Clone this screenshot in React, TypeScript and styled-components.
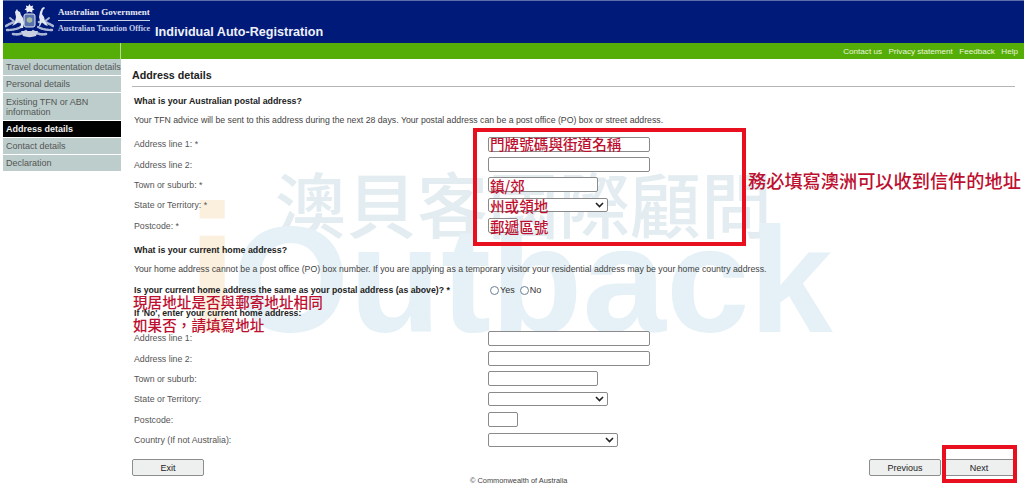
import { FC } from "react";
import styled, { createGlobalStyle } from "styled-components";

const GlobalStyle = createGlobalStyle`
  html, body {
    margin: 0;
    padding: 0;
    background: #fff;
  }
  * {
    box-sizing: border-box;
  }
`;

const navItems = [
  { label: "Travel documentation details" },
  { label: "Personal details" },
  { label: "Existing TFN or ABN information", tall: true },
  { label: "Address details", active: true },
  { label: "Contact details" },
  { label: "Declaration" },
];

const Emblem: FC = () => (
  <svg width="49" height="36" viewBox="0 0 49 36">
    {/* wattle sprays */}
    <g fill="none" stroke="#aab6d4" strokeLinecap="round">
      <path d="M1 23c5-3 9-5 14-4" strokeWidth="2.6" strokeDasharray="2 1.4" />
      <path d="M48 23c-5-3-9-5-14-4" strokeWidth="2.6" strokeDasharray="2 1.4" />
      <path d="M2 27c6 0 10-1 14-3" strokeWidth="2.4" strokeDasharray="1.6 1.6" />
      <path d="M47 27c-6 0-10-1-14-3" strokeWidth="2.4" strokeDasharray="1.6 1.6" />
      <path d="M8 31c5 1 9 0 13-3" strokeWidth="2.6" strokeDasharray="2 1.2" />
      <path d="M41 31c-5 1-9 0-13-3" strokeWidth="2.6" strokeDasharray="2 1.2" />
      <path d="M5 15l5 4M44 15l-5 4" strokeWidth="2" strokeDasharray="1.5 1.5" />
    </g>
    {/* kangaroo and emu */}
    <g fill="#e2e6ef">
      <path d="M10 9l2-3 1 2 2 1 1 3 2 3 1 5-1 5h-3l1-4-2-3-3 3-4 2 3-4 1-5z" />
      <path d="M37 5l2-1 1 1-2 2-1 4 2 3 1 4 3 5-3-1-3-3-2 4h-1l1-5-1-4 1-5z" />
    </g>
    {/* shield */}
    <rect x="19" y="11" width="11" height="13" rx="2" fill="#5872ad" stroke="#e6e9f2" />
    <circle cx="24.500" cy="17" r="2.800" fill="#a8bb9e" />
    <path d="M24.500 1l1.300 2.200 2.400-.6-.7 2.400 2 1.400-2.300 1 .2 2.400-2.900-1.200-2.900 1.200.2-2.400-2.300-1 2-1.400-.7-2.400 2.400.6z" fill="#eef0f6" />
    {/* scroll */}
    <path d="M16 28h17l-2 5c-4 1.500-9 1.500-13 0z" fill="#c9d0e2" />
  </svg>
);

const Arrow: FC = () => (
  <svg width="9" height="6" viewBox="0 0 9 6">
    <path d="M1 1l3.500 3.500L8 1" fill="none" stroke="#222" strokeWidth="1.600" />
  </svg>
);

const App: FC = () => (
  <Page>
    <GlobalStyle />
    <Watermark aria-hidden>
      <WatermarkCn>澳貝客國際顧問</WatermarkCn>
      <WatermarkEn>
        <WatermarkI>i</WatermarkI>Outback
      </WatermarkEn>
    </Watermark>

    <Header>
      <LogoArea>
        <Emblem />
        <AgencyText>
          <AgencyGov>Australian Government</AgencyGov>
          <AgencyAto>Australian Taxation Office</AgencyAto>
        </AgencyText>
      </LogoArea>
      <AppTitle>Individual Auto-Registration</AppTitle>
    </Header>

    <GreenBar>
      <GreenSpacer />
      <TopLinks>
        <TopLink>Contact us</TopLink>
        <TopLink>Privacy statement</TopLink>
        <TopLink>Feedback</TopLink>
        <TopLink>Help</TopLink>
      </TopLinks>
    </GreenBar>

    <Body>
      <Sidebar>
        {navItems.map((item) => (
          <NavItem key={item.label} $active={item.active} $tall={item.tall}>
            {item.label}
          </NavItem>
        ))}
      </Sidebar>

      <Main>
        <PageTitle>Address details</PageTitle>

        <SectionHeading>What is your Australian postal address?</SectionHeading>
        <Paragraph>
          Your TFN advice will be sent to this address during the next 28 days. Your postal
          address can be a post office (PO) box or street address.
        </Paragraph>

        <FormRows $top={8}>
          <Row>
            <Label>Address line 1: *</Label>
            <TextField $width={162} />
          </Row>
          <Row>
            <Label>Address line 2:</Label>
            <TextField $width={162} />
          </Row>
          <Row>
            <Label>Town or suburb: *</Label>
            <TextField $width={110} />
          </Row>
          <Row>
            <Label>State or Territory: *</Label>
            <SelectField $width={120}>
              <Arrow />
            </SelectField>
          </Row>
          <Row>
            <Label>Postcode: *</Label>
            <TextField $width={30} />
          </Row>
        </FormRows>

        <SectionHeading $top={9}>What is your current home address?</SectionHeading>
        <Paragraph>
          Your home address cannot be a post office (PO) box number. If you are applying as a
          temporary visitor your residential address may be your home country address.
        </Paragraph>

        <QuestionRow>
          <Question>Is your current home address the same as your postal address (as above)? *</Question>
          <RadioGroup>
            <Radio />
            <RadioLabel>Yes</RadioLabel>
            <Radio />
            <RadioLabel>No</RadioLabel>
          </RadioGroup>
        </QuestionRow>
        <SubQuestion>If 'No', enter your current home address:</SubQuestion>

        <FormRows $top={9}>
          <Row>
            <Label>Address line 1:</Label>
            <TextField $width={162} />
          </Row>
          <Row>
            <Label>Address line 2:</Label>
            <TextField $width={162} />
          </Row>
          <Row>
            <Label>Town or suburb:</Label>
            <TextField $width={110} />
          </Row>
          <Row>
            <Label>State or Territory:</Label>
            <SelectField $width={120}>
              <Arrow />
            </SelectField>
          </Row>
          <Row>
            <Label>Postcode:</Label>
            <TextField $width={30} />
          </Row>
          <Row>
            <Label>Country (If not Australia):</Label>
            <SelectField $width={130}>
              <Arrow />
            </SelectField>
          </Row>
        </FormRows>

        <ButtonBar>
          <ActionButton>Exit</ActionButton>
          <ButtonGroup>
            <ActionButton>Previous</ActionButton>
            <ActionButton>Next</ActionButton>
          </ButtonGroup>
        </ButtonBar>
        <Copyright>© Commonwealth of Australia</Copyright>
      </Main>
    </Body>

    <RedBox $left={473} $top={128} $width={273} $height={118} />
    <RedBox $left={942} $top={445} $width={75} $height={38} />

    <Note $left={490} $top={135} $size={14.6}>門牌號碼與街道名稱</Note>
    <Note $left={490} $top={177} $size={14.6}>鎮/郊</Note>
    <Note $left={490} $top={197} $size={14.6}>州或領地</Note>
    <Note $left={490} $top={218} $size={14.6}>郵遞區號</Note>
    <Note $left={748} $top={171} $size={18.2}>務必填寫澳洲可以收到信件的地址</Note>
    <Note $left={133} $top={293} $size={14.6}>現居地址是否與郵寄地址相同</Note>
    <Note $left={133} $top={316} $size={14.6}>如果否，請填寫地址</Note>
  </Page>
);

const Page = styled.div`
  position: relative;
  width: 1024px;
  height: 485px;
  overflow: hidden;
  padding-left: 3px;
  font-family: "Liberation Sans", Arial, sans-serif;
  color: #333;
`;

const Watermark = styled.div`
  position: absolute;
  left: 0;
  top: 0;
  width: 1024px;
  height: 485px;
  overflow: hidden;
  pointer-events: none;
`;

const WatermarkCn = styled.div`
  position: absolute;
  left: 275px;
  top: 157px;
  font-family: "Noto Sans CJK TC", sans-serif;
  font-weight: 500;
  font-size: 71px;
  line-height: 88px;
  white-space: nowrap;
  color: #e3ecf0;
`;

const WatermarkEn = styled.div`
  position: absolute;
  left: 187px;
  top: 204px;
  font-family: "Liberation Sans", sans-serif;
  font-weight: 700;
  font-size: 150px;
  line-height: 152px;
  white-space: nowrap;
  color: #e5f1f6;
`;

const WatermarkI = styled.span`
  margin-right: -5px;
  font-size: 182px;
  line-height: 0;
  color: #fbf0de;
`;

const Header = styled.header`
  position: relative;
  display: flex;
  align-items: flex-end;
  height: 43px;
  background: #001a7a;
  border-top: 1px solid #5c6fa8;
`;

const LogoArea = styled.div`
  display: flex;
  align-items: center;
  width: 152px;
  height: 42px;
  padding: 0 0 3px 2px;
`;

const AgencyText = styled.div`
  display: flex;
  flex-direction: column;
  width: 92px;
  margin-left: 4px;
  font-family: "Liberation Serif", serif;
  font-weight: 700;
  white-space: nowrap;
  color: #e6e9f4;
`;

const AgencyGov = styled.div`
  font-size: 9px;
  line-height: 11px;
  padding-bottom: 2px;
  border-bottom: 1px solid #c9d0e6;
`;

const AgencyAto = styled.div`
  font-size: 8.1px;
  line-height: 11px;
  padding-top: 2px;
  color: #c5cde8;
`;

const AppTitle = styled.div`
  font-size: 12.6px;
  font-weight: 700;
  line-height: 16px;
  padding-bottom: 3px;
  white-space: nowrap;
  color: #eef0f8;
`;

const GreenBar = styled.div`
  position: relative;
  display: flex;
  height: 16px;
  background: #55ad08;
`;

const GreenSpacer = styled.div`
  width: 118px;
  border-right: 1px solid #b6dc94;
`;

const TopLinks = styled.nav`
  display: flex;
  flex: 1;
  justify-content: flex-end;
  align-items: center;
  gap: 6.500px;
  padding-right: 6px;
`;

const TopLink = styled.span`
  font-size: 8.1px;
  color: #eaf6dc;
`;

const Body = styled.div`
  position: relative;
  display: flex;
`;

const Sidebar = styled.aside`
  flex: none;
  width: 118px;
`;

const NavItem = styled.div<{ $active?: boolean; $tall?: boolean }>`
  display: flex;
  align-items: center;
  height: ${({ $tall }) => ($tall ? 27 : 16)}px;
  margin-bottom: 1px;
  padding-left: 3px;
  font-size: 9px;
  line-height: 10px;
  font-weight: ${({ $active }) => ($active ? 700 : 400)};
  white-space: ${({ $tall }) => ($tall ? "normal" : "nowrap")};
  color: ${({ $active }) => ($active ? "#f2f2f2" : "#555")};
  background: ${({ $active }) => ($active ? "#000" : "#bccdcb")};
`;

const Main = styled.main`
  flex: 1;
  padding: 9px 9px 0 11px;
`;

const PageTitle = styled.h1`
  margin: 0 0 9px;
  height: 19px;
  font-size: 10.700px;
  line-height: 14px;
  font-weight: 700;
  color: #222;
  border-bottom: 1px solid #b5b5b5;
`;

const SectionHeading = styled.h2<{ $top?: number }>`
  margin: ${({ $top }) => $top ?? 0}px 0 8px 2px;
  font-size: 8.800px;
  line-height: 11px;
  font-weight: 700;
  color: #222;
`;

const Paragraph = styled.p`
  margin: 0 0 0 2px;
  font-size: 8.730px;
  line-height: 11px;
  white-space: nowrap;
  color: #444;
`;

const FormRows = styled.div<{ $top: number }>`
  margin-top: ${({ $top }) => $top}px;
`;

const Row = styled.div`
  display: flex;
  align-items: center;
  height: 20.400px;
  padding-left: 2px;
`;

const Label = styled.div`
  width: 354px;
  font-size: 8.800px;
  white-space: nowrap;
  color: #555;
`;

const TextField = styled.div<{ $width: number }>`
  width: ${({ $width }) => $width}px;
  height: 15px;
  background: #fff;
  border: 1px solid #8a8a8a;
  border-radius: 2px;
`;

const SelectField = styled.div<{ $width: number }>`
  display: flex;
  align-items: center;
  justify-content: flex-end;
  width: ${({ $width }) => $width}px;
  height: 14px;
  padding-right: 3px;
  background: #fff;
  border: 1px solid #8a8a8a;
  border-radius: 2px;
`;

const QuestionRow = styled.div`
  display: flex;
  align-items: center;
  height: 13px;
  margin-top: 9px;
  padding-left: 2px;
`;

const Question = styled.div`
  width: 354px;
  font-size: 8.700px;
  font-weight: 700;
  white-space: nowrap;
  color: #222;
`;

const RadioGroup = styled.div`
  display: flex;
  align-items: center;
`;

const Radio = styled.span`
  width: 9px;
  height: 9px;
  margin-left: 2px;
  border: 1px solid #6a7f95;
  border-radius: 50%;
  background: #fff;
`;

const RadioLabel = styled.span`
  margin: 0 3px 0 1px;
  font-size: 9px;
`;

const SubQuestion = styled.div`
  margin: 11px 0 0 2px;
  font-size: 8.700px;
  line-height: 11px;
  font-weight: 700;
  color: #222;
`;

const ButtonBar = styled.div`
  display: flex;
  justify-content: space-between;
  margin-top: 9px;
`;

const ButtonGroup = styled.div`
  display: flex;
  gap: 2px;
`;

const ActionButton = styled.div`
  display: flex;
  align-items: center;
  justify-content: center;
  width: 72px;
  height: 17px;
  font-size: 9px;
  color: #222;
  background: #eef0f0;
  border: 1px solid #8d8d8d;
  border-radius: 2px;
`;

const Copyright = styled.div`
  padding-left: 338px;
  font-size: 7.400px;
  line-height: 9px;
  color: #444;
`;

const RedBox = styled.div<{ $left: number; $top: number; $width: number; $height: number }>`
  position: absolute;
  left: ${({ $left }) => $left}px;
  top: ${({ $top }) => $top}px;
  width: ${({ $width }) => $width}px;
  height: ${({ $height }) => $height}px;
  border: 4px solid #e8101f;
`;

const Note = styled.span<{ $left: number; $top: number; $size: number }>`
  position: absolute;
  left: ${({ $left }) => $left}px;
  top: ${({ $top }) => $top}px;
  font-family: "Noto Sans CJK TC", sans-serif;
  font-weight: 500;
  font-size: ${({ $size }) => $size}px;
  line-height: 18px;
  white-space: nowrap;
  color: #bd1030;
`;

export default App;
